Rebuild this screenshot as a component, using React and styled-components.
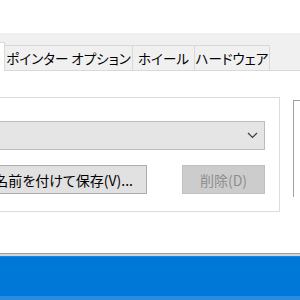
import React from "react";
import styled, { createGlobalStyle } from "styled-components";

const Global = createGlobalStyle`
  html, body { margin: 0; padding: 0; background: #ffffff; }
  body { width: 300px; height: 300px; overflow: hidden; font-family: "Noto Sans CJK JP", "Noto Sans", sans-serif; }
  * { box-sizing: border-box; }
`;

const Page = styled.div`
  width: 300px;
  height: 300px;
  display: flex;
  flex-direction: column;
  overflow: hidden;
  background: #ffffff;
`;

const TopBlank = styled.div`
  height: 33px;
  background: #ffffff;
  flex: none;
`;

const TabBar = styled.div`
  height: 38px;
  flex: none;
  display: flex;
  align-items: flex-end;
  background: #f0f0f0;
  border-bottom: 1px solid #d9d9d9;
`;

const Tab = styled.div`
  width: ${(p) => p.$w}px;
  height: 25px;
  flex: none;
  display: flex;
  align-items: center;
  justify-content: center;
  background: #f0f0f0;
  border: 1px solid #d9d9d9;
  border-bottom: none;
  margin-left: -1px;
  font-size: 13.5px;
  font-feature-settings: "palt";
  color: #000;
  white-space: nowrap;
`;

const SelectedTab = styled.div`
  width: 40px;
  height: 29px;
  flex: none;
  margin-left: -35px;
  margin-bottom: -1px;
  background: #ffffff;
  border: 1px solid #d9d9d9;
  border-bottom: none;
  position: relative;
  z-index: 1;
`;

const Body = styled.div`
  height: 182px;
  flex: none;
  display: flex;
  align-items: flex-start;
  overflow: hidden;
  background: #ffffff;
`;

const GroupBox = styled.div`
  flex: none;
  width: 300px;
  height: 115px;
  margin-left: -20px;
  margin-top: 26px;
  border: 1px solid #dcdcdc;
  padding: 23px 14px 0 10px;
  display: flex;
  flex-direction: column;
  gap: 15px;
`;

const Combo = styled.div`
  height: 29px;
  background: #e5e5e5;
  border: 1px solid #bcbcbc;
  display: flex;
  align-items: center;
  justify-content: flex-end;
  padding-right: 6px;
`;

const ButtonRow = styled.div`
  display: flex;
  align-items: center;
`;

const Button = styled.div`
  flex: none;
  width: ${(p) => p.$w}px;
  height: 29px;
  display: flex;
  align-items: center;
  justify-content: ${(p) => (p.$start ? "flex-end" : "center")};
  padding-right: ${(p) => (p.$start ? "13px" : "0")};
  margin-left: ${(p) => (p.$push ? "auto" : "0")};
  background: ${(p) => (p.$disabled ? "#cccccc" : "#e1e1e1")};
  border: 1px solid ${(p) => (p.$disabled ? "#bfbfbf" : "#adadad")};
  color: ${(p) => (p.$disabled ? "#8f8f8f" : "#000000")};
  font-size: 14px;
  font-feature-settings: "palt";
  white-space: nowrap;
`;

const SidePanel = styled.div`
  flex: none;
  width: 40px;
  height: 97px;
  margin-left: 13px;
  margin-top: 29px;
  background: #ffffff;
  border-top: 1px solid #a0a0a0;
  border-left: 1px solid #a0a0a0;
`;

const Divider = styled.div`
  height: 3px;
  flex: none;
  border-top: 1px solid #a0a0a0;
  background: #d4d4d4;
`;

const Taskbar = styled.div`
  height: 44px;
  flex: none;
  background: #0078d7;
  border-top: 1px solid #1a86dd;
  border-bottom: 4px solid #2a8ce0;
`;

const Chevron = () => (
  <svg width="11" height="7" viewBox="0 0 11 7">
    <path d="M1 1 L5.5 5.5 L10 1" fill="none" stroke="#3c3c3c" strokeWidth="1.2" />
  </svg>
);

export default function App() {
  return (
    <Page>
      <Global />
      <TopBlank />
      <TabBar>
        <SelectedTab />
        <Tab $w={129}>ポインター オプション</Tab>
        <Tab $w={63}>ホイール</Tab>
        <Tab $w={76}>ハードウェア</Tab>
      </TabBar>
      <Body>
        <GroupBox>
          <Combo>
            <Chevron />
          </Combo>
          <ButtonRow>
            <Button $w={156} $start>名前を付けて保存(V)...</Button>
            <Button $w={83} $push $disabled>削除(D)</Button>
          </ButtonRow>
        </GroupBox>
        <SidePanel />
      </Body>
      <Divider />
      <Taskbar />
    </Page>
  );
}
